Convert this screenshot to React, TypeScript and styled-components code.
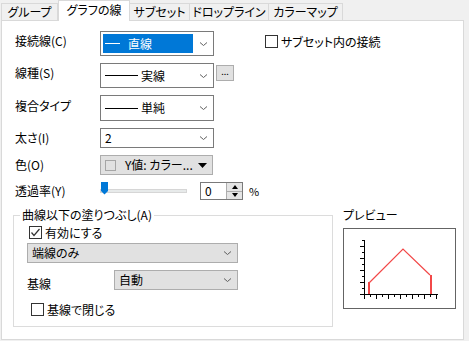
import styled, { createGlobalStyle } from "styled-components";

const GlobalStyle = createGlobalStyle`
  html, body {
    margin: 0;
    padding: 0;
    background: #f0f0f0;
  }
  body {
    font-family: "Noto Sans CJK JP", "Noto Sans", sans-serif;
    font-size: 12px;
    line-height: 14px;
    color: #000;
    font-feature-settings: "palt";
  }
`;

const Window = styled.div`
  width: 469px;
  height: 341px;
  box-sizing: border-box;
  padding-left: 1px;
`;

const TabBar = styled.div`
  display: flex;
  align-items: flex-end;
  height: 20px;
  position: relative;
  z-index: 1;
`;

const Tab = styled.div<{ $w: number; $active?: boolean; $first?: boolean }>`
  box-sizing: border-box;
  width: ${(p) => p.$w}px;
  height: ${(p) => (p.$active ? 21 : 17)}px;
  margin-bottom: ${(p) => (p.$active ? -1 : 0)}px;
  border-top: 1px solid #d9d9d9;
  border-right: 1px solid #d9d9d9;
  border-left: ${(p) => (p.$active || p.$first ? "1px solid #d9d9d9" : "none")};
  background: ${(p) => (p.$active ? "#fff" : "#f0f0f0")};
  display: flex;
  justify-content: center;
  align-items: center;
  padding-bottom: ${(p) => (p.$active ? 3 : 0)}px;
  white-space: nowrap;
`;

const Panel = styled.div`
  box-sizing: border-box;
  width: 463px;
  height: 320px;
  border: 1px solid #d9d9d9;
  background: #fff;
`;

const Form = styled.div`
  display: flex;
  flex-direction: column;
  gap: 7px;
  margin: 10px 0 0 13px;
`;

const Row = styled.div<{ $h: number }>`
  display: flex;
  align-items: center;
  height: ${(p) => p.$h}px;
`;

const Label = styled.div<{ $lift?: boolean }>`
  width: 85px;
  flex-shrink: 0;
  padding-bottom: ${(p) => (p.$lift ? 5 : 0)}px;
`;

const Combo = styled.div<{ $w: number; $gray?: boolean }>`
  box-sizing: border-box;
  width: ${(p) => p.$w}px;
  height: 100%;
  border: 1px solid ${(p) => (p.$gray ? "#adadad" : "#7a7a7a")};
  background: ${(p) => (p.$gray ? "#e1e1e1" : "#fff")};
  display: flex;
  align-items: center;
  padding: 0 5px 0 2px;
  flex-shrink: 0;
`;

const Value = styled.div<{ $selected?: boolean; $top?: boolean }>`
  flex: 1;
  align-self: stretch;
  margin: ${(p) => (p.$selected ? "2px 0" : "0")};
  background: ${(p) => (p.$selected ? "#0078d7" : "transparent")};
  color: ${(p) => (p.$selected ? "#fff" : "#000")};
  display: flex;
  align-items: ${(p) => (p.$top ? "flex-start" : "center")};
  padding: ${(p) => (p.$top ? "2px 0 0 2px" : "0 0 0 2px")};
  white-space: nowrap;
  overflow: hidden;
`;

const LineSample = styled.span<{ $w: number; $light?: boolean }>`
  display: inline-block;
  width: ${(p) => p.$w}px;
  height: 1px;
  background: ${(p) => (p.$light ? "#fff" : "#000")};
  margin-right: ${(p) => (p.$w > 20 ? 3 : 8)}px;
`;

const ChevronIcon = () => (
  <svg width="9" height="6" viewBox="0 0 9 6" style={{ marginLeft: 6 }}>
    <path d="M1 1.5 L4.5 4.5 L8 1.5" fill="none" stroke="#606060" strokeWidth="1" />
  </svg>
);

const TriangleIcon = () => (
  <svg width="9" height="5" viewBox="0 0 9 5" style={{ marginLeft: 4 }}>
    <path d="M0 0 H9 L4.5 5 Z" fill="#000" />
  </svg>
);

const DotsButton = styled.div`
  box-sizing: border-box;
  width: 18px;
  height: 16px;
  align-self: flex-start;
  margin: 2px 0 0 2px;
  border: 1px solid #adadad;
  background: #e1e1e1;
  font-size: 9px;
  line-height: 12px;
  text-align: center;
`;

const Swatch = styled.span`
  box-sizing: border-box;
  width: 11px;
  height: 11px;
  border: 1px solid #a6a6a6;
  margin: 0 7px 0 2px;
  flex-shrink: 0;
`;

const CheckWrap = styled.label<{ $ml?: number; $lift?: boolean }>`
  display: flex;
  align-items: center;
  gap: 3px;
  margin-left: ${(p) => p.$ml ?? 0}px;
  padding-bottom: ${(p) => (p.$lift ? 4 : 0)}px;
  white-space: nowrap;
  line-height: 13px;
`;

const Box = styled.span`
  box-sizing: border-box;
  width: 13px;
  height: 13px;
  border: 1px solid #333;
  background: #fff;
  display: flex;
  flex-shrink: 0;
`;

const Check = ({ checked, children, ml, lift }: { checked?: boolean; children: string; ml?: number; lift?: boolean }) => (
  <CheckWrap $ml={ml} $lift={lift}>
    <Box>
      {checked && (
        <svg width="11" height="11" viewBox="0 0 11 11">
          <path d="M1.5 5.5 L4 8.5 L9.5 2" fill="none" stroke="#333" strokeWidth="1.2" />
        </svg>
      )}
    </Box>
    {children}
  </CheckWrap>
);

const Slider = styled.div`
  position: relative;
  width: 87px;
  height: 100%;
  display: flex;
  align-items: center;
`;

const Track = styled.div`
  box-sizing: border-box;
  width: 100%;
  height: 4px;
  background: #e7eaea;
  border: 1px solid #d6d6d6;
`;

const Thumb = styled.svg`
  position: absolute;
  left: 1px;
  top: 0;
`;

const Spin = styled.div`
  box-sizing: border-box;
  width: 43px;
  height: 18px;
  margin-left: 13px;
  border: 1px solid #7a7a7a;
  display: flex;
  align-items: center;
  padding-left: 4px;
`;

const SpinText = styled.div`
  flex: 1;
`;

const SpinButtons = styled.div`
  box-sizing: border-box;
  width: 16px;
  height: 16px;
  border-left: 1px solid #adadad;
  background: #e5e5e5;
  display: flex;
  flex-direction: column;
`;

const SpinHalf = styled.div<{ $top?: boolean }>`
  flex: 1;
  display: flex;
  align-items: center;
  justify-content: center;
  border-bottom: ${(p) => (p.$top ? "1px solid #adadad" : "none")};
`;

const Percent = styled.span`
  margin-left: 6px;
  font-size: 11px;
`;

const Bottom = styled.div`
  display: flex;
  margin: 9px 0 0 11px;
  gap: 10px;
`;

const Group = styled.fieldset`
  box-sizing: border-box;
  width: 320px;
  height: 118px;
  margin: 0;
  padding: 0;
  border: 1px solid #dcdcdc;
  min-width: 0;
`;

const Legend = styled.legend`
  margin-left: 6px;
  padding: 0 2px;
  line-height: 12px;
`;

const GroupBody = styled.div`
  display: flex;
  flex-direction: column;
  padding: 5px 0 0 13px;
`;

const FillCombo = styled.div`
  height: 20px;
  margin-top: 4px;
  display: flex;
`;

const BaseRow = styled.div`
  height: 20px;
  margin-top: 7px;
  display: flex;
`;

const BaseLabel = styled.div`
  width: 87px;
  align-self: flex-end;
  line-height: 12px;
`;

const CloseRow = styled.div`
  margin-top: 13px;
  display: flex;
`;

const PreviewCol = styled.div`
  display: flex;
  flex-direction: column;
`;

const PreviewLabel = styled.div`
  line-height: 12px;
  margin-bottom: 7px;
`;

const PreviewBox = styled.div`
  box-sizing: border-box;
  width: 113px;
  height: 81px;
  border: 1px solid #646464;
  background: #fff;
`;

const PreviewChart = () => {
  const yTicks = Array.from({ length: 10 }, (_, k) => 11 + 6 * k);
  const xTicks = Array.from({ length: 13 }, (_, k) => 20 + 6 * k);
  return (
    <svg width="111" height="79" viewBox="0 0 111 79" shapeRendering="crispEdges">
      <line x1="20.5" y1="11" x2="20.5" y2="66" stroke="#000" />
      <line x1="20" y1="65.5" x2="94" y2="65.5" stroke="#000" />
      {yTicks.map((y, k) => (
        <line key={y} x1={k % 2 === 1 ? 16 : 18} y1={y + 0.5} x2="20" y2={y + 0.5} stroke="#000" />
      ))}
      {xTicks.map((x, k) => (
        <line key={x} x1={x + 0.5} y1="66" x2={x + 0.5} y2={k % 2 === 0 ? 70 : 68} stroke="#000" />
      ))}
      <g stroke="#f24848" fill="none">
        <line x1="25" y1="65" x2="25" y2="53" strokeWidth="2" />
        <line x1="87" y1="65" x2="87" y2="46" strokeWidth="2" />
      </g>
      <polyline points="25,54 59,20 86,46" fill="none" stroke="#f24848" strokeWidth="1.2" shapeRendering="auto" />
    </svg>
  );
};

export default function App() {
  return (
    <>
      <GlobalStyle />
      <Window>
        <TabBar>
          <Tab $w={57} $first>グループ</Tab>
          <Tab $w={72} $active>グラフの線</Tab>
          <Tab $w={60}>サブセット</Tab>
          <Tab $w={79}>ドロップライン</Tab>
          <Tab $w={74}>カラーマップ</Tab>
        </TabBar>
        <Panel>
          <Form>
            <Row $h={25}>
              <Label $lift>接続線(C)</Label>
              <Combo $w={114}>
                <Value $selected>
                  <LineSample $w={15} $light />
                  直線
                </Value>
                <ChevronIcon />
              </Combo>
              <Check ml={51} lift>サブセット内の接続</Check>
            </Row>
            <Row $h={25}>
              <Label $lift>線種(S)</Label>
              <Combo $w={114}>
                <Value>
                  <LineSample $w={33} />
                  実線
                </Value>
                <ChevronIcon />
              </Combo>
              <DotsButton>...</DotsButton>
            </Row>
            <Row $h={26}>
              <Label $lift>複合タイプ</Label>
              <Combo $w={114}>
                <Value>
                  <LineSample $w={33} />
                  単純
                </Value>
                <ChevronIcon />
              </Combo>
            </Row>
            <Row $h={20}>
              <Label>太さ(I)</Label>
              <Combo $w={114}>
                <Value $top>2</Value>
                <ChevronIcon />
              </Combo>
            </Row>
            <Row $h={20}>
              <Label>色(O)</Label>
              <Combo $w={113} $gray>
                <Swatch />
                <Value>Y値: カラー...</Value>
                <TriangleIcon />
              </Combo>
            </Row>
            <Row $h={18}>
              <Label>透過率(Y)</Label>
              <Slider>
                <Track />
                <Thumb width="8" height="13" viewBox="0 0 8 13">
                  <path d="M0 0 H7 V9 L3.5 12.5 L0 9 Z" fill="#0078d7" />
                </Thumb>
              </Slider>
              <Spin>
                <SpinText>0</SpinText>
                <SpinButtons>
                  <SpinHalf $top>
                    <svg width="6" height="4" viewBox="0 0 6 4">
                      <path d="M0 4 L3 0 L6 4 Z" fill="#000" />
                    </svg>
                  </SpinHalf>
                  <SpinHalf>
                    <svg width="6" height="4" viewBox="0 0 6 4">
                      <path d="M0 0 L6 0 L3 4 Z" fill="#000" />
                    </svg>
                  </SpinHalf>
                </SpinButtons>
              </Spin>
              <Percent>%</Percent>
            </Row>
          </Form>
          <Bottom>
            <Group>
              <Legend>曲線以下の塗りつぶし(A)</Legend>
              <GroupBody>
                <Check checked ml={2}>有効にする</Check>
                <FillCombo>
                  <Combo $w={211} $gray>
                    <Value>端線のみ</Value>
                    <ChevronIcon />
                  </Combo>
                </FillCombo>
                <BaseRow>
                  <BaseLabel>基線</BaseLabel>
                  <Combo $w={124} $gray>
                    <Value>自動</Value>
                    <ChevronIcon />
                  </Combo>
                </BaseRow>
                <CloseRow>
                  <Check ml={4}>基線で閉じる</Check>
                </CloseRow>
              </GroupBody>
            </Group>
            <PreviewCol>
              <PreviewLabel>プレビュー</PreviewLabel>
              <PreviewBox>
                <PreviewChart />
              </PreviewBox>
            </PreviewCol>
          </Bottom>
        </Panel>
      </Window>
    </>
  );
}
